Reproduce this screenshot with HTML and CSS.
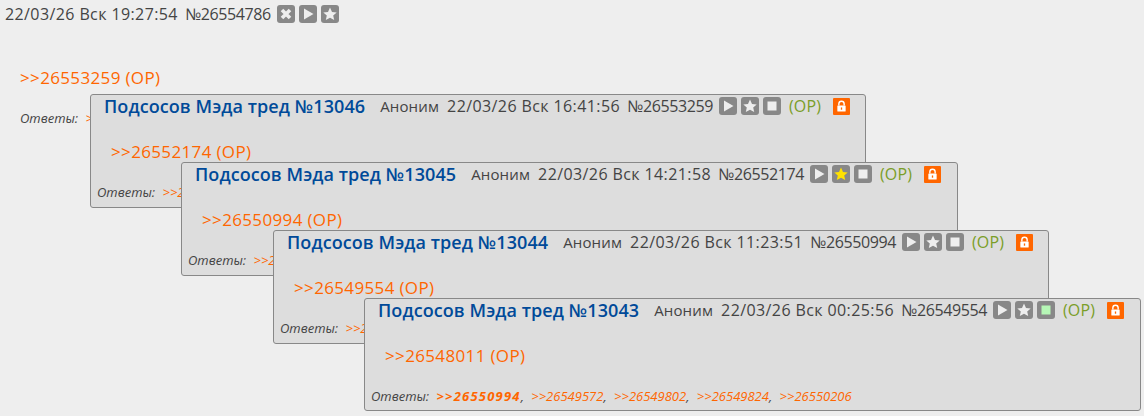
FILE: index.html
```html
<!DOCTYPE html>
<html lang="ru">
<head>
<meta charset="utf-8">
<title>Посты</title>
<link rel="stylesheet" href="styles.css">
</head>
<body>
<svg class="defs" width="0" height="0" aria-hidden="true">
  <symbol id="i-x" viewBox="0 0 18 18"><path d="M5 5l8 8M13 5l-8 8" stroke="#eee" stroke-width="3.6" fill="none"/></symbol>
  <symbol id="i-play" viewBox="0 0 18 18"><path d="M5 3.5L14.5 9 5 14.5z" fill="#eee"/></symbol>
  <symbol id="i-star" viewBox="0 0 18 18"><path d="M9 2.6l2 4.3 4.7.5-3.5 3.1 1 4.6L9 12.7l-4.2 2.4 1-4.6-3.5-3.1 4.7-.5z" fill="currentColor"/></symbol>
  <symbol id="i-stop" viewBox="0 0 18 18"><rect x="4.5" y="4.5" width="9" height="9" fill="currentColor"/></symbol>
  <symbol id="i-lock" viewBox="0 0 18 18"><path d="M6.2 8V6.2a2.8 2.8 0 0 1 5.6 0V8" stroke="#fff" stroke-width="1.5" fill="none"/><rect x="4.6" y="8" width="8.8" height="6.4" rx=".6" fill="#fff"/><rect x="8.3" y="10" width="1.4" height="2.4" fill="#f60"/></symbol>
</svg>

<header class="head">
  <span class="date">22/03/26 Вск 19:27:54</span>
  <span class="num">№26554786</span>
  <span class="btns">
    <svg class="btn"><use href="#i-x"/></svg>
    <svg class="btn"><use href="#i-play"/></svg>
    <svg class="btn"><use href="#i-star"/></svg>
  </span>
</header>
<p class="link root-link">&gt;&gt;26553259 (OP)</p>
<p class="replies root-replies">Ответы: <a>&gt;&gt;26552174</a></p>

<article class="post p1">
  <div class="ph">
    <span class="title">Подсосов Мэда тред №13046</span>
    <span class="name">Аноним</span>
    <span class="date">22/03/26 Вск 16:41:56</span>
    <span class="num">№26553259</span>
    <span class="btns">
      <svg class="btn"><use href="#i-play"/></svg>
      <svg class="btn"><use href="#i-star"/></svg>
      <svg class="btn"><use href="#i-stop"/></svg>
    </span>
    <span class="op">(OP)</span>
    <svg class="btn lock"><use href="#i-lock"/></svg>
  </div>
  <p class="link">&gt;&gt;26552174 (OP)</p>
  <p class="replies">Ответы: <a>&gt;&gt;26550994</a></p>
</article>

<article class="post p2">
  <div class="ph">
    <span class="title">Подсосов Мэда тред №13045</span>
    <span class="name">Аноним</span>
    <span class="date">22/03/26 Вск 14:21:58</span>
    <span class="num">№26552174</span>
    <span class="btns">
      <svg class="btn"><use href="#i-play"/></svg>
      <svg class="btn fav"><use href="#i-star"/></svg>
      <svg class="btn"><use href="#i-stop"/></svg>
    </span>
    <span class="op">(OP)</span>
    <svg class="btn lock"><use href="#i-lock"/></svg>
  </div>
  <p class="link">&gt;&gt;26550994 (OP)</p>
  <p class="replies">Ответы: <a>&gt;&gt;26549554</a></p>
</article>

<article class="post p3">
  <div class="ph">
    <span class="title">Подсосов Мэда тред №13044</span>
    <span class="name">Аноним</span>
    <span class="date">22/03/26 Вск 11:23:51</span>
    <span class="num">№26550994</span>
    <span class="btns">
      <svg class="btn"><use href="#i-play"/></svg>
      <svg class="btn"><use href="#i-star"/></svg>
      <svg class="btn"><use href="#i-stop"/></svg>
    </span>
    <span class="op">(OP)</span>
    <svg class="btn lock"><use href="#i-lock"/></svg>
  </div>
  <p class="link">&gt;&gt;26549554 (OP)</p>
  <p class="replies">Ответы: <a>&gt;&gt;26548011</a></p>
</article>

<article class="post p4">
  <div class="ph">
    <span class="title">Подсосов Мэда тред №13043</span>
    <span class="name">Аноним</span>
    <span class="date">22/03/26 Вск 00:25:56</span>
    <span class="num">№26549554</span>
    <span class="btns">
      <svg class="btn"><use href="#i-play"/></svg>
      <svg class="btn"><use href="#i-star"/></svg>
      <svg class="btn watch"><use href="#i-stop"/></svg>
    </span>
    <span class="op">(OP)</span>
    <svg class="btn lock"><use href="#i-lock"/></svg>
  </div>
  <p class="link">&gt;&gt;26548011 (OP)</p>
  <p class="replies">Ответы: <a class="strong">&gt;&gt;26550994</a>, <a>&gt;&gt;26549572</a>, <a>&gt;&gt;26549802</a>, <a>&gt;&gt;26549824</a>, <a>&gt;&gt;26550206</a></p>
</article>
</body>
</html>
```
FILE: styles.css
```css
html, body { margin: 0; padding: 0; }
body {
  width: 1144px;
  height: 416px;
  overflow: hidden;
  position: relative;
  background: #eee;
  color: #444;
  font: 16px/18px "Open Sans", sans-serif;
}
.defs { position: absolute; }
.head {
  display: flex;
  align-items: center;
  height: 18px;
  padding: 5px 0 0 5px;
}
.date { letter-spacing: .4px; margin-right: 7px; }
.num { letter-spacing: -.4px; }
.btns { display: inline-flex; gap: 4px; margin-left: 6px; }
.btn {
  width: 18px;
  height: 18px;
  flex: none;
  background: #888;
  border-radius: 3px;
  color: #eee;
}
.btn.fav { color: #ffe100; }
.btn.watch { color: #b6f7b6; }
.btn.lock { background: #f60; border-radius: 1px; margin-left: 12px; width: 17px; height: 17px; }
p { margin: 0; }
.link { color: #f60; font-size: 17px; line-height: 20px; letter-spacing: .35px; }
.root-link { margin: 45px 0 0 20px; }
.root-replies { margin: 22px 0 0 20px; }
.replies {
  font-size: 13px;
  font-style: italic;
  color: #444;
  line-height: 16px;
  white-space: nowrap;
  word-spacing: 4px;
  letter-spacing: 0;
}
.replies a { color: #f60; }
.replies a.strong { font-weight: bold; letter-spacing: 1.2px; }
.post {
  position: absolute;
  box-sizing: border-box;
  width: 776px;
  height: 114px;
  background: #ddd;
  border: 1px solid #888;
  border-radius: 3px;
  overflow: hidden;
}
.p1 { left: 90px; top: 94px; }
.p2 { left: 181px; top: 162px; width: 777px; }
.p3 { left: 273px; top: 230px; }
.p4 { left: 364px; top: 298px; height: 113px; width: 777px; }
.ph {
  display: flex;
  align-items: center;
  height: 22px;
  padding-left: 13px;
  white-space: nowrap;
}
.title { color: #004a99; font-size: 18px; font-weight: 600; margin-right: 15px; letter-spacing: .08px; }
.name { margin-right: 8px; font-size: 15px; letter-spacing: .15px; }
.op { color: #7a9e28; margin-left: 8px; font-weight: 500; letter-spacing: .2px; }
.post .link { margin: 25px 0 0 20px; }
.post .replies { margin: 22px 0 0 6px; }
```
